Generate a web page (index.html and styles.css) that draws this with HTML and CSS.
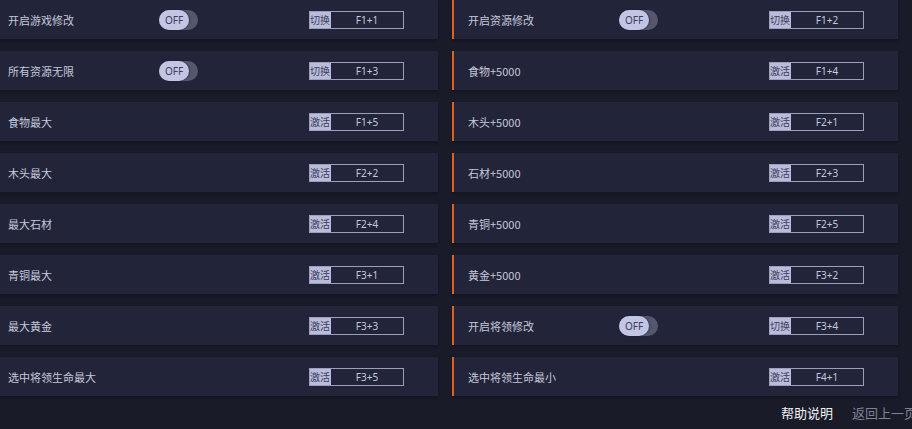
FILE: index.html
```html
<!DOCTYPE html>
<html lang="zh-CN">
<head>
    <meta charset="UTF-8">
    <title>修改器</title>
    <link rel="stylesheet" href="styles.css">
</head>
<body>
    <div class="page">
        <div class="grid">
            <div class="row">
                <span class="label">开启游戏修改</span>
                <span class="slot"><span class="toggle"><span class="knob">OFF</span></span></span>
                <span class="key"><span class="key-type">切换</span><span class="key-code">F1+1</span></span>
            </div>
            <div class="row">
                <span class="label">开启资源修改</span>
                <span class="slot"><span class="toggle"><span class="knob">OFF</span></span></span>
                <span class="key"><span class="key-type">切换</span><span class="key-code">F1+2</span></span>
            </div>

            <div class="row">
                <span class="label">所有资源无限</span>
                <span class="slot"><span class="toggle"><span class="knob">OFF</span></span></span>
                <span class="key"><span class="key-type">切换</span><span class="key-code">F1+3</span></span>
            </div>
            <div class="row">
                <span class="label">食物+5000</span>
                <span class="slot"></span>
                <span class="key"><span class="key-type">激活</span><span class="key-code">F1+4</span></span>
            </div>

            <div class="row">
                <span class="label">食物最大</span>
                <span class="slot"></span>
                <span class="key"><span class="key-type">激活</span><span class="key-code">F1+5</span></span>
            </div>
            <div class="row">
                <span class="label">木头+5000</span>
                <span class="slot"></span>
                <span class="key"><span class="key-type">激活</span><span class="key-code">F2+1</span></span>
            </div>

            <div class="row">
                <span class="label">木头最大</span>
                <span class="slot"></span>
                <span class="key"><span class="key-type">激活</span><span class="key-code">F2+2</span></span>
            </div>
            <div class="row">
                <span class="label">石材+5000</span>
                <span class="slot"></span>
                <span class="key"><span class="key-type">激活</span><span class="key-code">F2+3</span></span>
            </div>

            <div class="row">
                <span class="label">最大石材</span>
                <span class="slot"></span>
                <span class="key"><span class="key-type">激活</span><span class="key-code">F2+4</span></span>
            </div>
            <div class="row">
                <span class="label">青铜+5000</span>
                <span class="slot"></span>
                <span class="key"><span class="key-type">激活</span><span class="key-code">F2+5</span></span>
            </div>

            <div class="row">
                <span class="label">青铜最大</span>
                <span class="slot"></span>
                <span class="key"><span class="key-type">激活</span><span class="key-code">F3+1</span></span>
            </div>
            <div class="row">
                <span class="label">黄金+5000</span>
                <span class="slot"></span>
                <span class="key"><span class="key-type">激活</span><span class="key-code">F3+2</span></span>
            </div>

            <div class="row">
                <span class="label">最大黄金</span>
                <span class="slot"></span>
                <span class="key"><span class="key-type">激活</span><span class="key-code">F3+3</span></span>
            </div>
            <div class="row">
                <span class="label">开启将领修改</span>
                <span class="slot"><span class="toggle"><span class="knob">OFF</span></span></span>
                <span class="key"><span class="key-type">切换</span><span class="key-code">F3+4</span></span>
            </div>

            <div class="row">
                <span class="label">选中将领生命最大</span>
                <span class="slot"></span>
                <span class="key"><span class="key-type">激活</span><span class="key-code">F3+5</span></span>
            </div>
            <div class="row">
                <span class="label">选中将领生命最小</span>
                <span class="slot"></span>
                <span class="key"><span class="key-type">激活</span><span class="key-code">F4+1</span></span>
            </div>
        </div>

        <div class="footer">
            <span class="help">帮助说明</span>
            <span class="back">返回上一页</span>
        </div>
    </div>
</body>
</html>
```

FILE: styles.css
```css
html, body {
    margin: 0;
    height: 100%;
    overflow: hidden;
}

body {
    background-color: #1a1b29;
    font-family: "Microsoft YaHei", "Noto Sans CJK SC", "Noto Sans", sans-serif;
    color: #c6c8da;
}

/* left column starts off-screen, like the original window */
.page {
    margin-left: -8px;
    width: 934px;
}

.grid {
    display: grid;
    grid-template-columns: 446px 446px;
    column-gap: 14px;
    row-gap: 12px;
}

.row {
    display: flex;
    align-items: center;
    height: 39px;
    padding-left: 14px;
    background-color: #22243a;
    border-left: 2px solid #e0601e;
    box-shadow: 0 2px 3px rgba(0, 0, 0, 0.25);
}

.label {
    width: 151px;
    font-size: 11px;
    white-space: nowrap;
}

.slot {
    width: 150px;
    display: flex;
    align-items: center;
}

.toggle {
    display: flex;
    width: 39px;
    height: 20px;
    border-radius: 10px;
    background-color: #54576e;
}

.knob {
    width: 30px;
    height: 20px;
    border-radius: 10px;
    background-color: #c3c5e4;
    color: #3b3d58;
    font-family: "Noto Sans", sans-serif;
    font-size: 10px;
    line-height: 20px;
    text-align: center;
    box-shadow: 1px 0 2px rgba(0, 0, 0, 0.3);
}

.key {
    display: flex;
    width: 95px;
    height: 18px;
    box-sizing: border-box;
    border: 1px solid #9c9fbc;
}

.key-type {
    width: 21px;
    background-color: #b9bcda;
    color: #3d3f5a;
    font-size: 10px;
    line-height: 16px;
    white-space: nowrap;
    overflow: hidden;
}

.key-code {
    flex: 1;
    text-align: center;
    font-family: "Noto Sans", sans-serif;
    font-size: 10px;
    line-height: 16px;
    color: #c6c8da;
}

.footer {
    display: flex;
    justify-content: flex-end;
    align-items: center;
    gap: 19px;
    height: 33px;
    padding-right: 9px;
    font-size: 13px;
    white-space: nowrap;
}

.help {
    color: #f2f2f6;
}

.back {
    color: #7f8194;
}
```
